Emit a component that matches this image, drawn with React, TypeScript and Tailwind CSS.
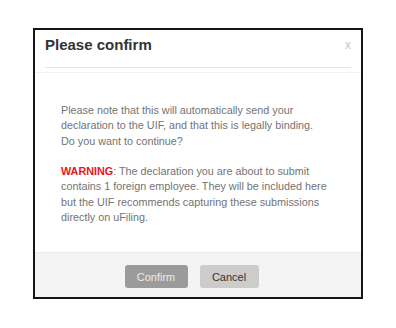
export default function App() {
  return (
    <div className="min-h-[328px] w-[396px] bg-white pt-[28px] pl-[33px]" style={{ fontFamily: '"Liberation Sans", Arial, sans-serif' }}>
      <div className="w-[330px] border-2 border-[#151515] bg-white">
        {/* Header */}
        <div className="border-b border-[#f2f2f2]">
          <div className="mx-[10px] flex items-start justify-between border-b border-[#e6e6e6] pt-[5px] pb-[12px]">
            <h1 className="text-[15px] font-bold leading-[20px] text-[#333]">Please confirm</h1>
            <span className="mt-[2px] text-[12px] leading-[16px] text-[#c8c8c8]">x</span>
          </div>
          <div className="h-[4px]" />
        </div>

        {/* Body */}
        <div className="px-[26px] pt-[30px] pb-[27px] text-[10.8px] leading-[15.3px] text-[#737373]">
          <p>
            Please note that this will automatically send your
            <br />
            declaration to the UIF, and that this is legally binding.
            <br />
            Do you want to continue?
          </p>
          <p className="mt-[15.3px]">
            <span className="font-bold text-[#e8141b]">WARNING</span>: The declaration you are about to submit
            contains 1 foreign employee. They will be included here but the UIF recommends capturing these
            submissions directly on uFiling.
          </p>
        </div>

        {/* Footer */}
        <div className="flex justify-center gap-[12px] border-t border-[#ececec] bg-[#f4f4f4] pt-[12px] pb-[9px] pr-[13px]">
          <button className="h-[23px] w-[63px] rounded-[3px] bg-[#9b9b9b] text-[11px] text-[#ececec]">Confirm</button>
          <button className="h-[23px] w-[59px] rounded-[3px] bg-[#cccccc] text-[11px] text-[#333]">Cancel</button>
        </div>
      </div>
    </div>
  );
}
